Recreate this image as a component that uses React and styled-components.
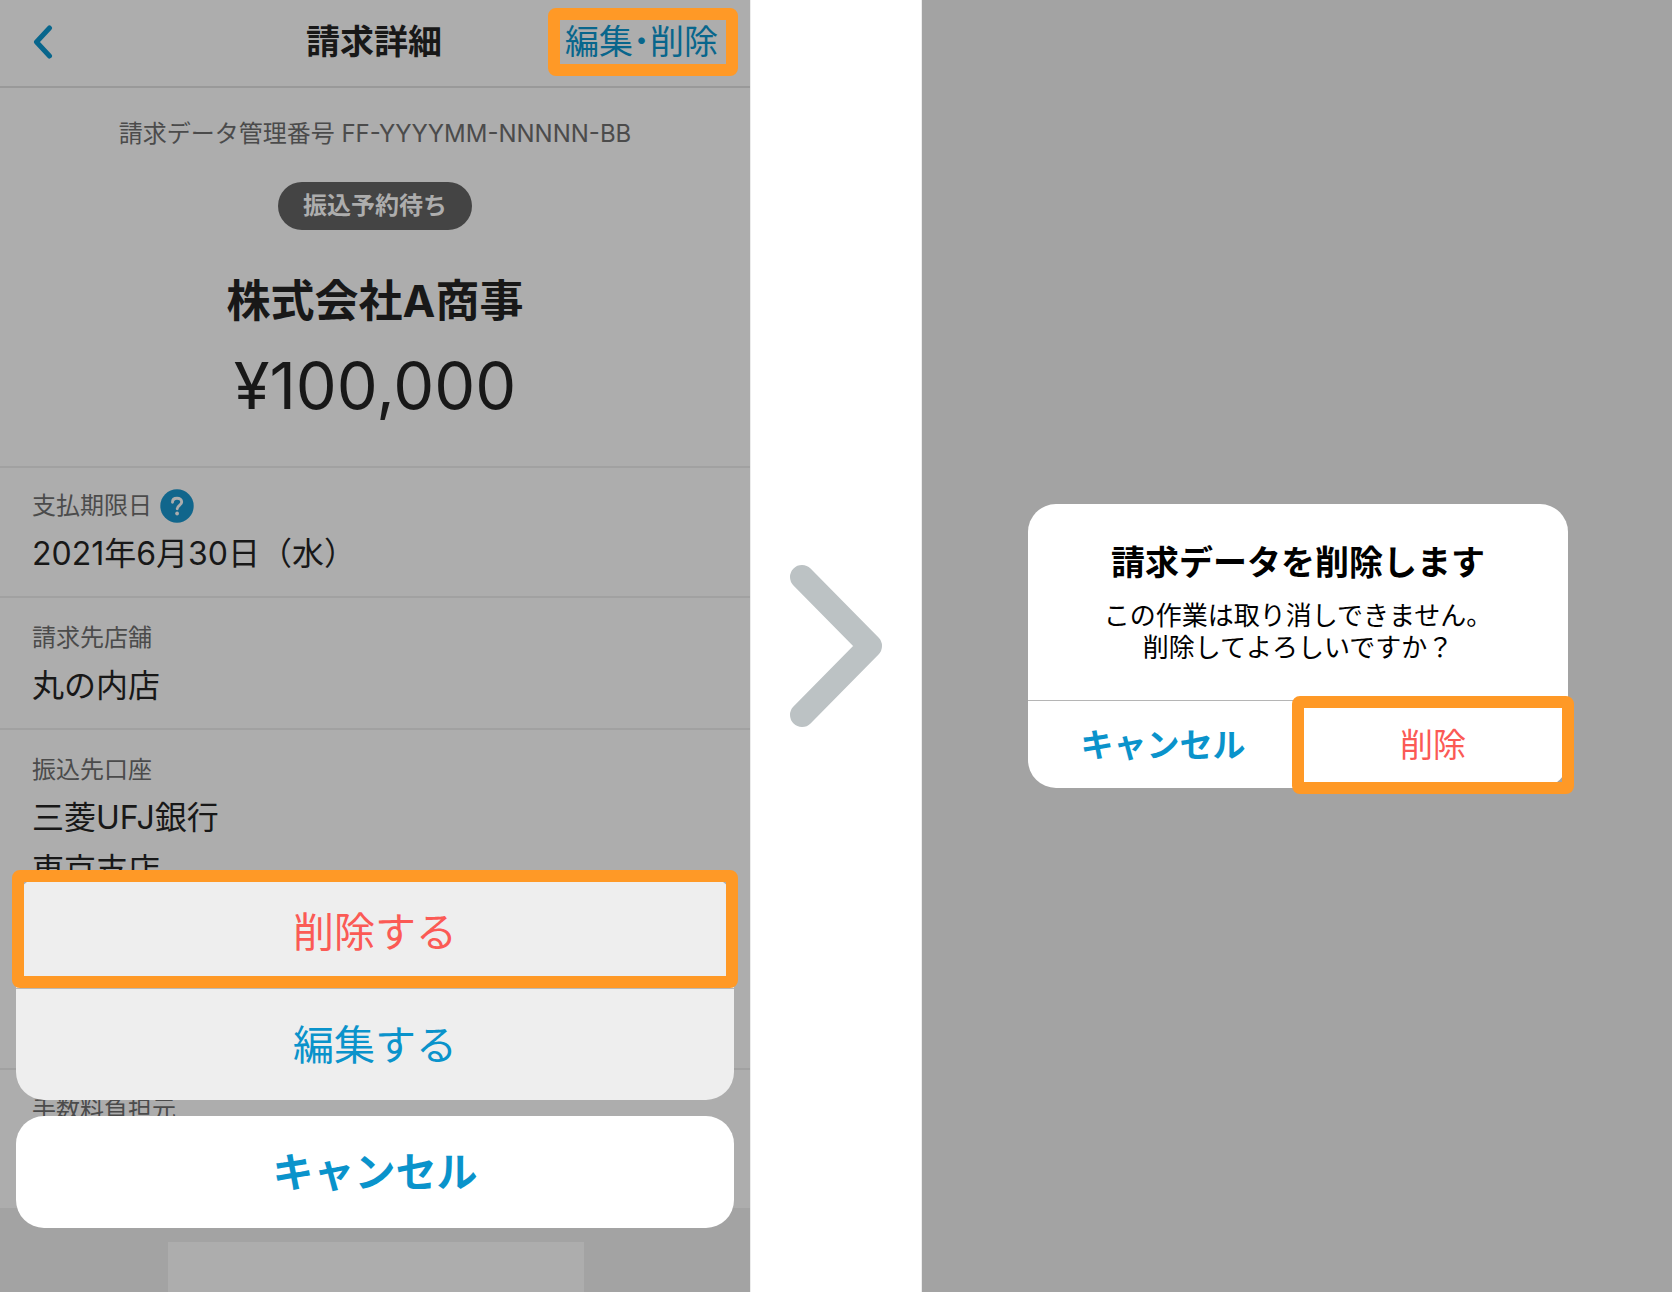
import React from "react";
import styled, { createGlobalStyle, css } from "styled-components";

const color = {
  accent: "#0a93cb",
  accentDim: "#08668c",
  danger: "#fb5a55",
  highlight: "#ff9926",
  surfaceDim: "#adadad",
  backdrop: "#a3a3a3",
  lineDim: "#a1a1a1",
  ink: "#181818",
  inkSoft: "#4b4b4b",
};

const GlobalStyle = createGlobalStyle`
  *, *::before, *::after { box-sizing: border-box; }
  body { margin: 0; background: #fff; font-family: Inter, "Noto Sans CJK JP", sans-serif; }
  h1, h2, p, dl, dt, dd { margin: 0; }
  button { margin: 0; padding: 0; border: 0; background: none; font-family: inherit; cursor: pointer; }
`;

const Flow = styled.div`
  display: grid;
  grid-template-columns: 1fr 172px 1fr;
  min-height: 100vh;
`;

const Detail = styled.section`
  position: relative;
  display: flex;
  flex-direction: column;
  background: ${color.surfaceDim};
  color: ${color.ink};
`;

const Header = styled.header`
  display: grid;
  grid-template-columns: 1fr auto 1fr;
  align-items: center;
  height: 88px;
  padding: 0 12px 2px 32px;
  border-bottom: 2px solid #999;
`;

const BackButton = styled.button`
  justify-self: start;
  display: flex;
`;

const HeaderTitle = styled.h1`
  margin-right: 22px;
  font-size: 34px;
  line-height: 48px;
  font-weight: 700;
`;

const HeaderAction = styled.button`
  justify-self: end;
  width: 190px;
  height: 68px;
  padding-right: 3px;
  border: 12px solid ${color.highlight};
  border-radius: 8px;
  color: ${color.accentDim};
  font-size: 34px;
  line-height: 44px;
  white-space: nowrap;
`;

const Summary = styled.div`
  display: flex;
  flex-direction: column;
  align-items: center;
  padding: 28px 32px 40px;
  border-bottom: 2px solid ${color.lineDim};
`;

const Reference = styled.p`
  color: ${color.inkSoft};
  font-size: 24px;
  line-height: 36px;
`;

const Status = styled.span`
  margin-top: 30px;
  padding: 0 25px;
  border-radius: 24px;
  background: #444;
  color: ${color.surfaceDim};
  font-size: 24px;
  line-height: 48px;
  font-weight: 700;
`;

const Company = styled.h2`
  margin-top: 41px;
  font-size: 44px;
  line-height: 60px;
  font-weight: 700;
`;

const Amount = styled.p`
  margin-top: 15px;
  font-size: 65px;
  line-height: 80px;
`;

const Fields = styled.dl`
  display: flex;
  flex-direction: column;
`;

const Field = styled.div`
  min-height: ${(p) => p.$minHeight || 0}px;
  padding: ${(p) => (p.$compact ? 16 : 18)}px 32px 16px;

  & + & {
    border-top: 2px solid ${color.lineDim};
  }
`;

const Label = styled.dt`
  display: flex;
  align-items: center;
  gap: 8px;
  color: ${color.inkSoft};
  font-size: 24px;
  line-height: 44px;
`;

const Value = styled.dd`
  font-size: 32px;
  line-height: 52px;
`;

const HelpButton = styled.button`
  display: flex;
`;

const Footer = styled.div`
  flex: 1;
  display: flex;
  justify-content: center;
  padding: 34px 0 0 2px;
  background: ${color.backdrop};
`;

const FooterCard = styled.div`
  width: 416px;
  min-height: 50px;
  background: ${color.surfaceDim};
`;

const Sheet = styled.div`
  position: absolute;
  left: 16px;
  right: 16px;
  bottom: 64px;
  display: flex;
  flex-direction: column;
  gap: 16px;
`;

const SheetGroup = styled.div`
  display: flex;
  flex-direction: column;
`;

const highlightFrame = css`
  position: relative;

  &::after {
    content: "";
    position: absolute;
    inset: ${(p) => p.$frame};
    border: 12px solid ${color.highlight};
    border-radius: 8px;
    pointer-events: none;
  }
`;

const SheetButton = styled.button`
  height: 112px;
  background: #eee;
  color: ${(p) => (p.$danger ? color.danger : color.accent)};
  font-size: 41px;
  line-height: 56px;

  ${SheetGroup} > &:first-child { border-radius: 28px 28px 0 0; }
  ${SheetGroup} > &:last-child { border-radius: 0 0 28px 28px; border-top: 1px solid #b8b8b8; }
  ${(p) => p.$frame && highlightFrame}
`;

const SheetCancel = styled(SheetButton)`
  border-radius: 28px;
  background: #fff;
  font-weight: 700;
`;

const Step = styled.div`
  display: flex;
  align-items: center;
  justify-content: center;
  border: solid #ececec;
  border-width: 0 1px;
`;

const Confirm = styled.section`
  display: flex;
  align-items: center;
  justify-content: center;
  padding-left: 2px;
  background: ${color.backdrop};
`;

const Dialog = styled.div`
  width: 540px;
  border-radius: 28px;
  background: #fff;
  color: #000;
  text-align: center;
`;

const DialogBody = styled.div`
  padding: 34px 32px 36px;
  border-bottom: 1px solid #b5b5b5;
`;

const DialogTitle = styled.h2`
  font-size: 34px;
  line-height: 50px;
  font-weight: 700;
`;

const DialogText = styled.p`
  margin-top: 12px;
  font-size: 26px;
  line-height: 32px;
`;

const DialogActions = styled.div`
  display: grid;
  grid-template-columns: 1fr 1fr;
`;

const DialogButton = styled.button`
  height: 87px;
  color: ${(p) => (p.$danger ? color.danger : color.accent)};
  font-size: 33px;
  line-height: 48px;
  font-weight: ${(p) => (p.$danger ? 400 : 700)};
  ${(p) => p.$frame && highlightFrame}
`;

function BackIcon() {
  return (
    <svg width="22" height="34" viewBox="0 0 22 34" fill="none" aria-hidden="true">
      <path d="M17.500 3 4.500 17 17.500 31" stroke={color.accentDim} strokeWidth="5" strokeLinecap="round" strokeLinejoin="round" />
    </svg>
  );
}

function HelpIcon() {
  return (
    <svg width="34" height="34" viewBox="0 0 34 34" fill="none" aria-hidden="true">
      <circle cx="17" cy="17" r="16.700" fill="#11668c" />
      <path
        d="M12.500 13.200C12.500 10.600 14.400 9.200 17 9.200s4.700 1.400 4.700 3.900c0 3.300-4.500 3.300-4.500 6.700"
        stroke="#adadad"
        strokeWidth="2.900"
        strokeLinecap="round"
      />
      <circle cx="17.100" cy="24.500" r="1.900" fill="#adadad" />
    </svg>
  );
}

function StepIcon() {
  return (
    <svg width="92" height="162" viewBox="0 0 92 162" fill="none" aria-hidden="true">
      <path d="M12 12 80 81 12 150" stroke="#bcc2c4" strokeWidth="24" strokeLinecap="round" strokeLinejoin="round" />
    </svg>
  );
}

export default function App() {
  return (
    <>
      <GlobalStyle />
      <Flow>
        <Detail>
          <Header>
            <BackButton type="button" aria-label="戻る">
              <BackIcon />
            </BackButton>
            <HeaderTitle>請求詳細</HeaderTitle>
            <HeaderAction type="button">
              編集<b>･</b>削除
            </HeaderAction>
          </Header>

          <Summary>
            <Reference>請求データ管理番号 FF-YYYYMM-NNNNN-BB</Reference>
            <Status>振込予約待ち</Status>
            <Company>株式会社A商事</Company>
            <Amount>¥100,000</Amount>
          </Summary>

          <Fields>
            <Field $compact>
              <Label>
                支払期限日
                <HelpButton type="button" aria-label="ヘルプ">
                  <HelpIcon />
                </HelpButton>
              </Label>
              <Value>2021年6月30日（水）</Value>
            </Field>
            <Field>
              <Label>請求先店舗</Label>
              <Value>丸の内店</Value>
            </Field>
            <Field $minHeight={340}>
              <Label>振込先口座</Label>
              <Value>三菱UFJ銀行</Value>
              <Value>東京支店</Value>
            </Field>
            <Field $minHeight={140}>
              <Label>手数料負担元</Label>
            </Field>
          </Fields>

          <Footer>
            <FooterCard />
          </Footer>

          <Sheet>
            <SheetGroup>
              <SheetButton type="button" $danger $frame="-6px -4px 0">
                削除する
              </SheetButton>
              <SheetButton type="button">編集する</SheetButton>
            </SheetGroup>
            <SheetCancel type="button">キャンセル</SheetCancel>
          </Sheet>
        </Detail>

        <Step>
          <StepIcon />
        </Step>

        <Confirm>
          <Dialog role="dialog">
            <DialogBody>
              <DialogTitle>請求データを削除します</DialogTitle>
              <DialogText>
                この作業は取り消しできません。
                <br />
                削除してよろしいですか？
              </DialogText>
            </DialogBody>
            <DialogActions>
              <DialogButton type="button">キャンセル</DialogButton>
              <DialogButton type="button" $danger $frame="-5px -6px -6px">
                削除
              </DialogButton>
            </DialogActions>
          </Dialog>
        </Confirm>
      </Flow>
    </>
  );
}
